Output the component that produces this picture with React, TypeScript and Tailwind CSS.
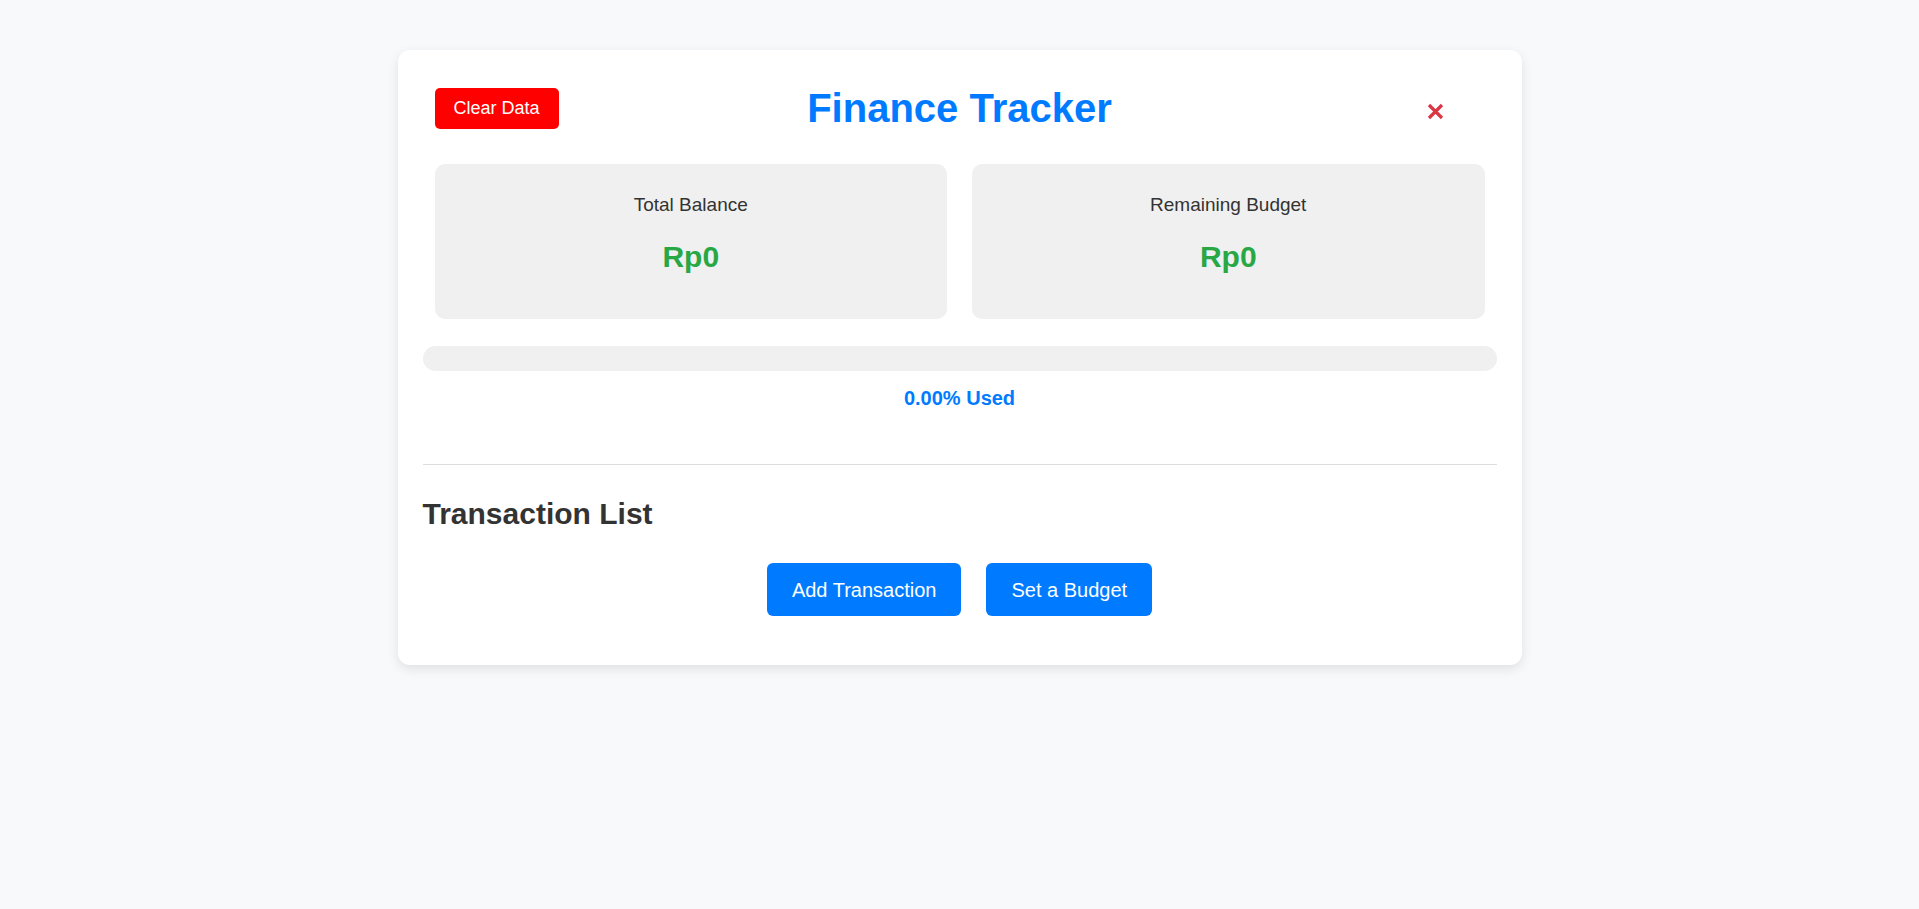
import React from 'react';

// Small stat box used for balance and budget
function StatCard({ label, value }: { label: string; value: string }) {
  return (
    <div className="flex-1 rounded-[10px] bg-[#f0f0f0] pt-[30px] pb-[44px] text-center">
      <p className="text-[19px] leading-[22px] text-[#333]">{label}</p>
      <p className="mt-[24px] text-[30px] leading-[34.5px] font-bold text-[#28a745]">{value}</p>
    </div>
  );
}

export default function App() {
  const used = 0;

  return (
    <div className="min-h-screen bg-[#f8f9fa] pt-[50px] font-['Liberation_Sans',Arial,sans-serif]">
      <div className="mx-auto w-[1124px] rounded-[12px] bg-white px-[25px] pt-[25px] pb-[49px] shadow-[0_4px_12px_rgba(0,0,0,0.1)]">
        {/* header */}
        <div className="mt-[9px] grid h-[48px] grid-cols-[1fr_auto_1fr] items-center">
          <div className="pl-[12px]">
            <button className="h-[41px] rounded-[5px] bg-[#ff0000] px-[19px] text-[18px] text-white">
              Clear Data
            </button>
          </div>
          <h1 className="text-[40px] leading-[46px] font-bold text-[#007bff]">Finance Tracker</h1>
          <div className="flex justify-end pr-[53px]">
            <button className="mt-[6px] text-[#dc3545]" aria-label="close">
              <svg width="17" height="17" viewBox="0 0 17 17">
                <path d="M2 2 L15 15 M15 2 L2 15" stroke="currentColor" strokeWidth="3.2" strokeLinecap="butt" />
              </svg>
            </button>
          </div>
        </div>

        {/* stats */}
        <div className="mx-[12px] mt-[32px] flex gap-[25px]">
          <StatCard label="Total Balance" value="Rp0" />
          <StatCard label="Remaining Budget" value="Rp0" />
        </div>

        {/* budget progress */}
        <div className="mt-[27px] h-[25px] w-full overflow-hidden rounded-full bg-[#f0f0f0]">
          <div className="h-full bg-[#007bff]" style={{ width: `${used}%` }} />
        </div>
        <p className="mt-[16px] text-center text-[20px] leading-[23px] font-bold text-[#007bff]">
          {used.toFixed(2)}% Used
        </p>

        <hr className="mt-[54px] border-0 border-t border-[#dddddd]" />

        <h2 className="mt-[32px] text-[30px] leading-[34.5px] font-bold text-[#333]">Transaction List</h2>

        <div className="mt-[32px] flex justify-center gap-[25px]">
          <button className="h-[53px] rounded-[6px] bg-[#007bff] px-[25px] text-[20px] text-white">
            Add Transaction
          </button>
          <button className="h-[53px] rounded-[6px] bg-[#007bff] px-[25px] text-[20px] text-white">
            Set a Budget
          </button>
        </div>
      </div>
    </div>
  );
}
